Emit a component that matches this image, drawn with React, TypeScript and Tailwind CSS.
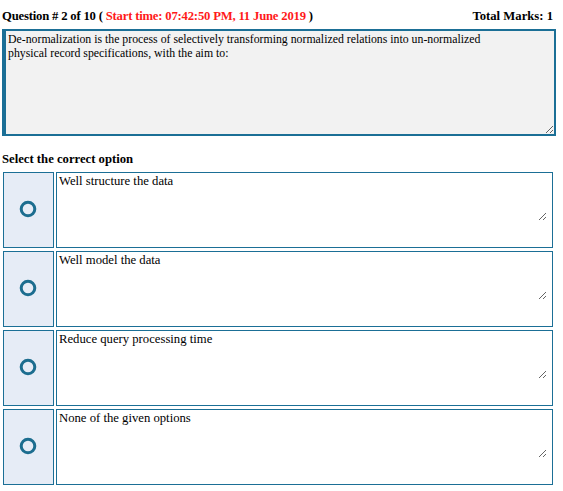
const options = [
    "Well structure the data",
    "Well model the data",
    "Reduce query processing time",
    "None of the given options",
];

export default function App() {
    return (
        <div className="w-[563px] h-[491px] bg-white text-black text-[12.7px] leading-[15px] font-['Liberation_Serif',serif]">
            {/* Header */}
            <div className="flex justify-between items-end pl-[2px] pr-[10px] pt-[6px] h-[29px] pb-[5px]">
                <div className="font-bold tracking-[-0.2px]">
                    Question # 2 of 10 ({" "}
                    <span className="text-[#ff1a1a]">Start time: 07:42:50 PM, 11 June 2019</span> )
                </div>
                <div className="font-bold">Total Marks: 1</div>
            </div>

            {/* Question text */}
            <textarea
                readOnly
                className="block ml-[2px] w-[554px] h-[107px] bg-[#f2f2f2] border-2 border-l-4 border-[#1b6f96] pl-[2px] pr-[40px] py-[1px] text-[11.8px] leading-[14px] text-black outline-none"
                value="De-normalization is the process of selectively transforming normalized relations into un-normalized physical record specifications, with the aim to:"
            />

            <div className="mt-[16px] pl-[2px] font-bold">Select the correct option</div>

            {/* Options */}
            <div className="mt-[5px] flex flex-col gap-[3px] pl-[3px]">
                {options.map((opt) => (
                    <div key={opt} className="flex gap-[2px] h-[76px]">
                        <div className="w-[51px] shrink-0 bg-[#e6ecf6] border border-[#1b6f96] flex items-center justify-center">
                            <svg width="20" height="20" viewBox="0 0 20 20" className="mb-[3px] mr-[2px]">
                                <circle cx="10" cy="10" r="6.8" fill="none" stroke="#1c6d8f" strokeWidth="3" />
                            </svg>
                        </div>
                        <div className="w-[497px] h-[76px] bg-white border border-[#1b6f96]">
                            <textarea
                                readOnly
                                className="block w-[490px] h-[48px] bg-white px-[2px] py-[1px] text-[12.7px] leading-[15px] text-black outline-none"
                                value={opt}
                            />
                        </div>
                    </div>
                ))}
            </div>
        </div>
    );
}
